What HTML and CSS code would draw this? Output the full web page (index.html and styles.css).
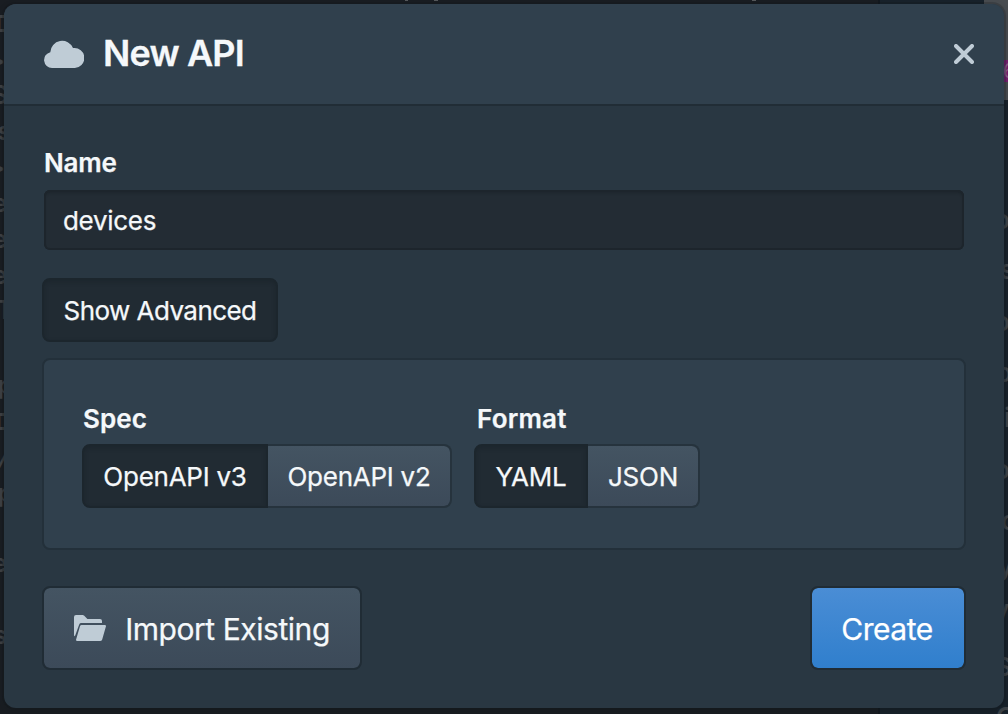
FILE: index.html
```html
<!DOCTYPE html>
<html lang="en">
<head>
<meta charset="utf-8">
<title>New API</title>
<link rel="stylesheet" href="styles.css">
</head>
<body>
<svg class="backdrop" width="1008" height="714" viewBox="0 0 1008 714" aria-hidden="true">
  <rect class="bd-right" x="879" y="0" width="129" height="714"/>
  <rect class="bd-line" x="878" y="0" width="2" height="714"/>
  <rect class="bd-tab" x="984" y="0" width="24" height="100"/>
  <rect class="bd-badge" x="997" y="60" width="30" height="22" rx="5"/>
  <g class="bd-code" text-anchor="end">
    <text x="6" y="32">I</text><text x="5" y="69">&gt;</text><text x="8" y="104">S</text>
    <text x="11" y="140">s</text><text x="5" y="176">&gt;</text><text x="7" y="212">e</text>
    <text x="7" y="248">e</text><text x="7" y="284">e</text><text x="13" y="319">T</text>
    <text x="13" y="394">p</text><text x="6" y="430">I</text><text x="11" y="468">/</text>
    <text x="13" y="502">p</text><text x="7" y="572">e</text><text x="7" y="644">s</text>
  </g>
  <g class="bd-nav">
    <text x="994" y="229">o</text><text x="1000" y="279">s</text><text x="994" y="331">o</text>
    <text x="996" y="382">o</text><text x="1004" y="427">i</text><text x="994" y="479">o</text>
    <text x="1001" y="530">c</text><text x="998" y="575">y</text><text x="994" y="619">v</text>
    <text x="995" y="676">S</text><text x="996" y="726">C</text>
  </g>
  <text class="bd-num" x="1003" y="78">6</text>
  <g class="bd-top"><rect x="405" y="0" width="3" height="1"/><rect x="434" y="0" width="4" height="1"/><rect x="752" y="0" width="4" height="1"/></g>
</svg>
<main class="dialog">
  <header class="header">
    <svg class="cloud" width="40" height="28" viewBox="0 0 40 28"><path d="M8 28A8 8 0 0 1 6.3 12.2A11.8 11.8 0 0 1 29 8.1A10 10 0 1 1 30 28Z"/></svg>
    <h1 class="title">New API</h1>
    <svg class="close" width="20" height="20" viewBox="0 0 20 20"><path d="M2 2L18 18M18 2L2 18"/></svg>
  </header>
  <div class="body">
    <div class="label name">Name</div>
    <div class="input">devices</div>
    <div class="btn pressed advanced"><span>Show Advanced</span></div>
    <section class="card">
      <div class="field">
        <div class="label">Spec</div>
        <div class="group">
          <div class="btn pressed first spec3"><span>OpenAPI v3</span></div>
          <div class="btn last spec2"><span>OpenAPI v2</span></div>
        </div>
      </div>
      <div class="field format">
        <div class="label">Format</div>
        <div class="group">
          <div class="btn pressed first yaml"><span>YAML</span></div>
          <div class="btn last json"><span>JSON</span></div>
        </div>
      </div>
    </section>
    <footer class="footer">
      <div class="btn large import">
        <svg class="folder" width="32" height="26" viewBox="0 0 32 26"><path d="M0 20V2Q0 0 2 0H8.6Q9.4 0 10 .6L13.4 4H26Q28 4 28 6V8H7.2Q5.8 8 5.2 9.4L1.2 20.6Q.4 22 0 20Z"/><path d="M7.6 10H30.6Q32.4 10 31.9 11.6L28.2 24.4Q27.7 26 26 26H3.4Q1.6 26 2.1 24.4L5.9 11.4Q6.3 10 7.6 10Z"/></svg>
        <span>Import Existing</span>
      </div>
      <div class="btn large create"><span>Create</span></div>
    </footer>
  </div>
</main>
</body>
</html>
```
FILE: styles.css
```css
* { box-sizing: border-box; }
body {
  margin: 0;
  width: 1008px;
  height: 714px;
  padding: 4px;
  overflow: hidden;
  position: relative;
  background: #191d22;
  color: #f5f8fa;
  font-family: Inter, "Liberation Sans", sans-serif;
}
.backdrop { position: absolute; left: 0; top: 0; }
.bd-right { fill: #18222b; }
.bd-line { fill: #12181e; }
.bd-tab { fill: #484c50; }
.bd-badge { fill: #762071; }
.bd-code { fill: #3f4245; font: 600 25px Inter, sans-serif; }
.bd-code text:first-child, .bd-code text:nth-child(12), .bd-code text:nth-child(11) { font-family: "Liberation Mono", monospace; }
.bd-nav { fill: #3e4449; font: 600 26px Inter, sans-serif; }
.bd-num { fill: #8b5b89; font: 20px Inter, sans-serif; }
.bd-top { fill: #55595c; }
.dialog {
  position: relative;
  width: 1000px;
  height: 704px;
  border-radius: 12px;
  overflow: hidden;
  background: #293742;
  box-shadow: 0 0 0 2px rgba(16, 22, 26, .2), 0 4px 8px rgba(16, 22, 26, .3);
}
.header {
  height: 102px;
  padding: 0 30px 0 40px;
  display: flex;
  align-items: center;
  background: #30404d;
  border-bottom: 2px solid #212d36;
}
.cloud, .folder { fill: #bfccd6; flex: none; }
.title {
  margin: 0 0 0 19px;
  padding-bottom: 2px;
  flex: 1;
  font-size: 36px;
  line-height: 40px;
  font-weight: 600;
  letter-spacing: -.85px;
  -webkit-text-stroke: .3px;
  white-space: nowrap;
}
.close { fill: none; stroke: #bfccd6; stroke-width: 4; stroke-linecap: round; }
.body { padding: 40px 38px 0; }
.label {
  height: 36px;
  padding-left: 2px;
  font-size: 26px;
  line-height: 34px;
  font-weight: 600;
  letter-spacing: .1px;
  -webkit-text-stroke: .25px;
  white-space: nowrap;
}
.name { letter-spacing: -.2px; }
.input {
  width: 920px;
  height: 60px;
  margin: 8px 2px 28px;
  padding: 0 19px;
  font-size: 26px;
  line-height: 62px;
  letter-spacing: -.3px;
  -webkit-text-stroke: .25px;
  background: #232c34;
  border-radius: 6px;
  box-shadow: inset 0 0 0 2px #1d252c, inset 0 3px 3px rgba(16, 22, 26, .3);
}
.btn {
  height: 64px;
  display: flex;
  align-items: center;
  justify-content: center;
  font-size: 26px;
  letter-spacing: -.25px;
  -webkit-text-stroke: .25px;
  white-space: nowrap;
  border: 2px solid #26333d;
  border-radius: 8px;
  background: linear-gradient(#445462, #3c4a59) padding-box;
}
.pressed {
  background: #212b33;
  border-color: #1c262d;
  box-shadow: inset 0 2px 4px rgba(16, 22, 26, .25);
}
.advanced { width: 236px; letter-spacing: -.55px; }
.card {
  height: 192px;
  margin-top: 16px;
  padding: 42px 38px 0;
  display: flex;
  gap: 22px;
  background: #30404d;
  border: 2px solid #23303a;
  border-radius: 8px;
}
.card .label { height: 42px; padding-left: 1px; }
.card .format .label { padding-left: 3px; letter-spacing: .2px; }
.group { display: flex; }
.first { border-radius: 8px 0 0 8px; }
.last { border-left: 0; border-radius: 0 8px 8px 0; }
.spec3 { width: 186px; }
.spec2 { width: 184px; }
.yaml { width: 114px; }
.json { width: 112px; }
.footer { margin-top: 36px; display: flex; justify-content: space-between; }
.large { height: 84px; padding-top: 2px; font-size: 30px; border-color: #202c35; }
.import { width: 320px; gap: 19px; letter-spacing: -.45px; }
.import .folder { margin-top: -2px; }
.create { width: 156px; padding-right: 2px; letter-spacing: -.5px; background: linear-gradient(#4a8dd5, #307fcd) padding-box; color: #fff; }
```
